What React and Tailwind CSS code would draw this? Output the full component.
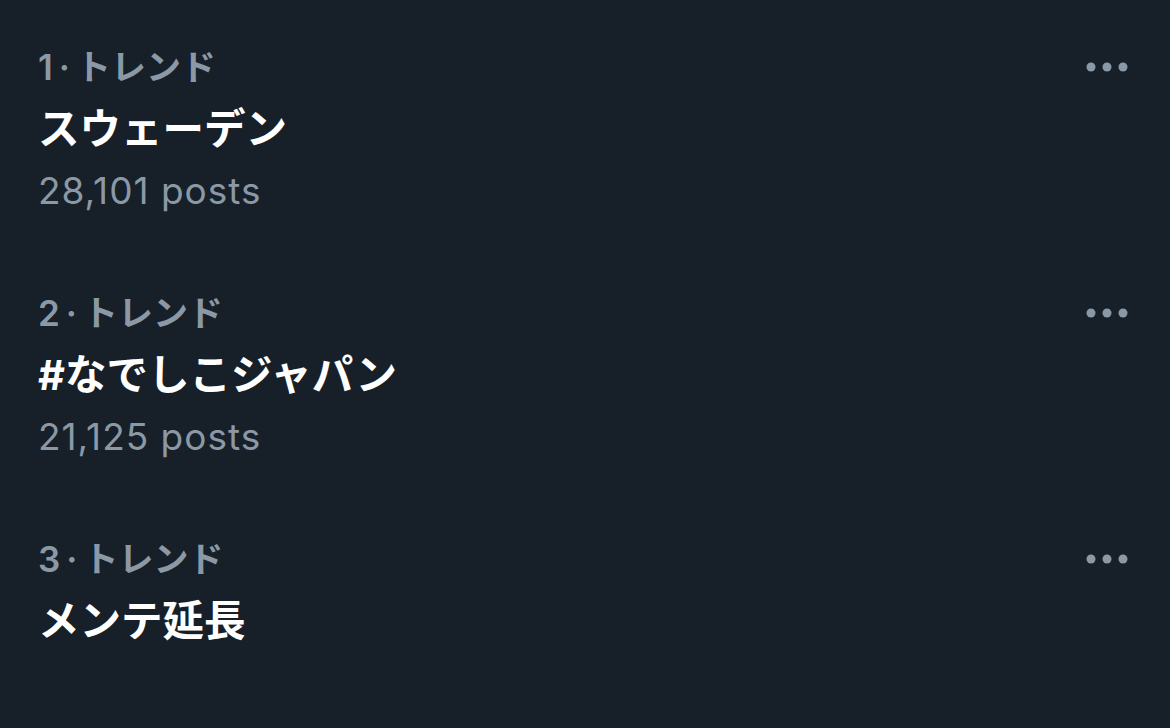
import React from 'react';

const TRENDS = [
  { rank: 1, title: 'スウェーデン', posts: '28,101 posts' },
  { rank: 2, title: '#なでしこジャパン', posts: '21,125 posts' },
  { rank: 3, title: 'メンテ延長', posts: null },
];

const FONT = { fontFamily: 'Inter, "Noto Sans CJK JP", sans-serif' };

function MoreDots() {
  return (
    <svg width="42" height="10" viewBox="0 0 42 10" className="text-[#8b98a5]" fill="currentColor">
      <circle cx="5" cy="5" r="4.5" />
      <circle cx="21" cy="5" r="4.5" />
      <circle cx="37" cy="5" r="4.5" />
    </svg>
  );
}

export default function App() {
  return (
    <div className="w-[1170px] h-[728px] bg-[#172029] overflow-hidden" style={FONT}>
      <div className="flex flex-col gap-[60px] pt-[36px] pl-[38px] pr-[42px]">
        {TRENDS.map((t) => (
          <div key={t.rank} className="flex items-start justify-between">
            <div className="flex flex-col">
              <div className="h-[62px] flex items-center text-[35px] font-semibold text-[#8b98a5]">
                <span>{t.rank}</span>
                <span className="mx-[6px]">·</span>
                <span>トレンド</span>
              </div>
              <div className="h-[62px] flex items-center text-[41.5px] font-bold text-white">
                {t.title}
              </div>
              {t.posts && (
                <div className="h-[62px] flex items-center text-[37px] tracking-[1px] text-[#8b98a5]">
                  {t.posts}
                </div>
              )}
            </div>
            <div className="h-[62px] flex items-center">
              <MoreDots />
            </div>
          </div>
        ))}
      </div>
    </div>
  );
}
